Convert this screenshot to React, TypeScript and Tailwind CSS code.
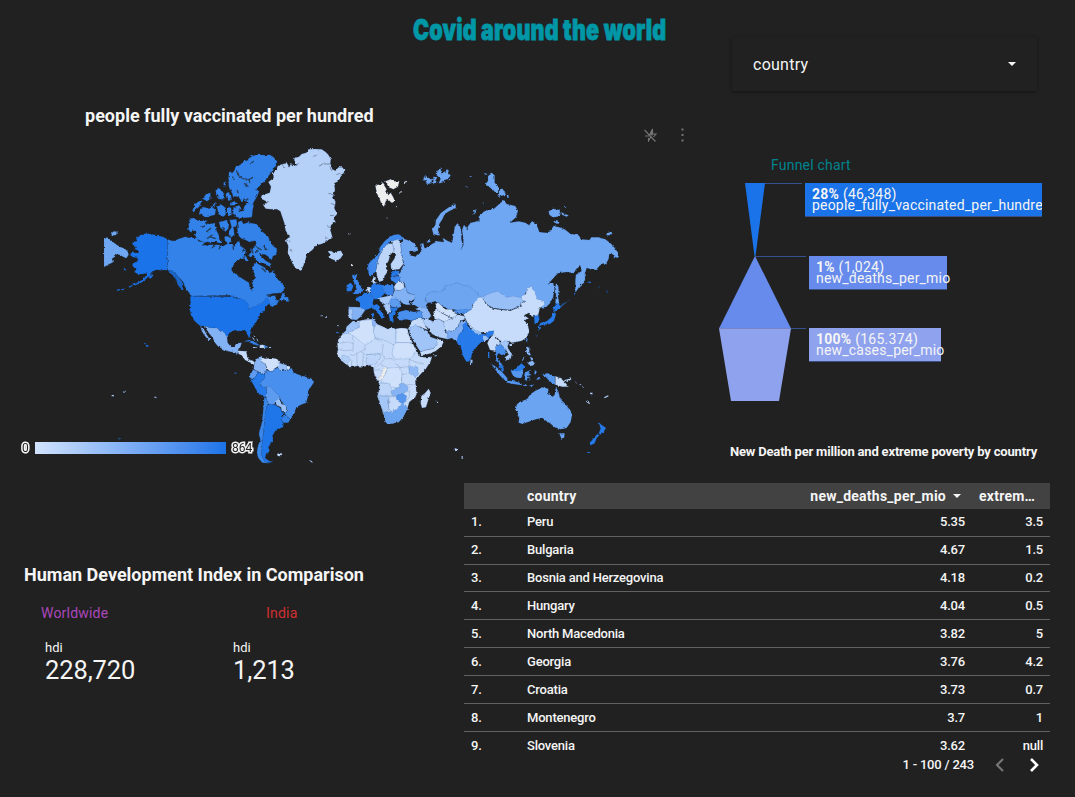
import React from "react";

type Shape = [fill: string, d: string];

/* Each map sheet is drawn on a grid three times finer than the page. */
const northAmerica: Shape[] = [
  ["#70a7f2", "M27 292L38 293 48 301 58 309 66 315 78 322 90 326 98 335 101 344 94 355 84 350 76 345 62 343 60 350 51 356 54 367 42 373 27 381ZM48 281L56 274 66 275 69 280 61 286 52 286Z"],
  ["#1a73e8", "M218 298L205 291 190 287 178 283 168 284 155 278 146 284 134 285 124 294 125 302 112 307 113 314 126 322 118 327 132 332 130 339 108 338 106 345 114 352 130 354 128 364 114 370 111 378 124 388 118 396 130 403 143 402 155 400 150 412 138 422 124 430 112 434 120 436 136 430 150 420 160 410 168 402 176 393 184 389 196 391 208 390 217 391ZM160 412L170 403 175 406 167 416ZM66 450l10-3v3l-10 3ZM78 448l10-2v3l-10 2ZM100 441l12-7v4l-10 6ZM84 387l10 1-2 3-8-1Z"],
  ["#3282e9", "M218 298L230 303 240 302 250 297 262 293 272 290 280 293 290 292 296 296 308 297 310 304 326 306 330 316 350 314 372 314 384 319 396 312 412 312 418 320 425 308 432 300 436 318 446 326 440 342 452 348 440 355 430 360 418 372 410 384 410 392 422 402 436 412 452 422 462 428 464 440 470 452 474 440 470 428 480 414 478 400 472 388 474 372 484 368 496 376 508 382 518 392 528 398 534 392 540 402 548 418 560 430 570 440 566 452 556 460 540 460 526 464 516 472 530 468 545 466 540 478 550 484 542 492 528 500 522 490 516 480 508 486 492 497 476 503 459 507 458 496 450 484 438 477 424 472 408 470 406 466 290 468 284 462 278 452 270 440 266 428 254 414 240 400 230 392 218 391Z"],
  ["#1a66c8", "M218 391L230 391 240 400 252 413 262 428 262 440 266 450 258 446 248 434 244 420 232 406Z"],
  ["#3282e9", "M430 245L440 242 445 252 452 250 460 247 470 250 484 252 494 262 498 272 508 280 520 290 524 304 534 318 546 326 544 344 534 348 530 360 522 352 512 344 500 342 492 340 500 350 512 362 530 372 526 380 510 374 496 368 484 358 476 346 466 352 460 346 470 336 466 326 480 322 484 308 476 300 462 306 452 300 440 296 432 288 428 274 426 258ZM440 318L452 330 450 344 456 354 462 366 452 362 442 354 440 340 448 330Z"],
  ["#3282e9", "M284 236L296 234 310 242 322 244 334 240 330 250 344 252 356 250 362 262 366 276 374 286 372 298 382 304 376 310 362 306 346 306 330 308 316 302 304 296 300 286 304 276 294 270 288 278 280 268 282 250ZM372 246L396 240 402 254 400 266 390 276 382 268 376 262ZM404 240L424 238 426 250 416 264 418 284 406 294 400 276 410 262ZM388 288L402 290 410 304 400 310 390 302Z"],
  ["#3282e9", "M292 212L300 192 312 184 322 182 318 196 308 204 300 214ZM322 176L334 162 346 158 346 176 336 184 330 180ZM316 206L326 200 342 206 352 202 362 210 360 224 346 228 334 234 322 226 312 220ZM366 200L380 194 392 204 392 224 384 230 370 222ZM362 150L372 144 384 156 388 166 388 178 374 178 364 166ZM386 128L392 125 392 136 386 136ZM392 162L400 156 408 166 410 180 400 182 394 172ZM404 190L418 184 428 190 418 196 406 196ZM396 204L408 200 410 224 402 228 396 218ZM416 204L432 196 440 206 430 210 436 214 450 212 446 206 450 196 462 188 476 194 470 232 440 234 420 230 414 218ZM352 192L362 188 360 196ZM348 200L360 196 358 202Z"],
  ["#3282e9", "M402 98L412 98 418 92 422 80 436 74 446 64 458 60 464 52 480 46 496 44 512 46 524 44 536 52 546 64 546 74 536 84 530 96 522 106 516 116 506 126 494 138 484 148 492 154 488 166 482 176 474 190 470 196 456 186 448 176 440 186 432 172 414 168 408 152 402 142 400 122Z"],
  ["#b5d1f8", "M548 78L562 72 576 70 584 82 586 68 592 78 606 76 598 62 598 54 612 50 620 42 634 38 640 28 660 27 680 28 692 36 700 44 708 58 706 70 712 88 722 92 730 82 742 82 750 92 744 102 736 112 730 124 718 130 720 150 714 170 722 186 718 204 726 222 716 238 722 244 708 256 706 270 712 290 696 304 680 312 664 316 652 330 636 342 632 358 626 376 618 392 604 386 594 374 586 354 578 340 580 318 572 300 584 290 572 272 568 250 562 232 556 214 546 208 530 208 512 206 504 194 518 186 498 176 500 166 524 158 528 140 520 126 536 114 534 98 544 90Z"],
  ["#b5d1f8", "M698 334L708 332 716 338 726 334 738 332 744 344 736 356 722 362 708 356 700 350 708 346Z"],
  ["#3282e9", "M552 482L562 462 568 458 568 470 580 472 581 485 572 484 566 478ZM526 496L540 488 552 484 546 492 530 502Z"],
];

const inlets =
  "M424 92L432 108 444 116 462 118 474 112M462 118L464 128M448 130L460 142M412 110L418 120M430 160L426 150M440 190L460 176M466 72L476 64M430 240L428 252 430 264M318 262L330 258M334 276L348 264M336 296L352 284M344 290L362 296M322 316L336 308 338 320M350 326L362 310M372 328L378 312M416 330L414 318M384 262L390 280 378 290M456 320L470 310M468 318L474 340M486 322L500 330M504 318L516 330M480 338L490 330M450 344L446 356M464 364L474 380M500 382L512 396M514 466L534 462 550 470 552 458";

const greenlandFjords =
  "M672 78L686 72 706 72M652 50L664 46M724 104L736 100M704 82L712 94M562 72L566 84M606 76L612 68M512 186L522 184M708 190L722 196M706 226L724 228M690 290L700 296M584 330L592 334M696 260L706 262M574 300L586 304M700 160L714 164";

const southAmerica: Shape[] = [
  ["#1a73e8", "M286 19L408 20 410 16 414 22 428 24 444 28 456 36 460 44 459 57 476 51 490 46 506 36 510 28 520 28 524 38 518 46 508 54 512 60 496 68 492 78 486 92 478 104 470 112 466 122 468 138 462 142 456 132 452 122 440 120 430 124 420 120 404 128 398 136 394 138 386 126 378 126 366 114 346 114 330 108 316 108 306 100 298 92 288 74 284 62 286 40ZM148 159l5 1v3l-5-1ZM153 165l8 1-3 5-5-2Z"],
  ["#83b2f4", "M330 108L346 114 366 114 378 126 386 126 396 140 398 158 406 168 418 170 424 160 440 158 436 172 430 180 428 192 414 186 398 184 384 178 370 170 360 158 352 142 342 130 334 118ZM316 108L326 116 334 132 346 150 343 154 328 136 320 122Z"],
  ["#c6dbf9", "M430 182L454 184 456 198 460 208 474 212 480 218 474 222 462 216 450 210 440 196 430 192ZM494 165L504 164 518 170 508 174 494 174ZM478 136l3 5-4 0ZM472 140l8 10-6-2ZM484 144l8 10-5-1ZM522 171h6v3h-6ZM476 171h6v3h-6Z"],
  ["#3282e9", "M446 156L460 150 476 154 488 162 496 166 484 166 470 160 456 154ZM506 166L518 170 510 174Z"],
  ["#8ab6f5", "M478 218L486 206 500 198 506 206 500 216 512 222 514 240 508 254 498 248 488 244 476 238Z"],
  ["#d0e2fb", "M500 202L510 206 528 204 546 206 556 220 548 230 538 236 534 244 524 244 516 236 512 222 500 216Z"],
  ["#98c0f6", "M552 218L562 222 574 224 578 232 576 240 564 240 554 242 548 232Z"],
  ["#d0e2fb", "M576 226L588 232 580 241 576 238Z"],
  ["#5e9bf0", "M466 248L476 239 488 244 484 258 472 268 464 262Z"],
  ["#267ae9", "M464 264L472 270 484 258 488 246 498 250 510 254 510 266 498 274 496 286 504 292 514 292 516 308 510 322 494 314 484 300 474 282Z"],
  ["#4990ee", "M510 250L514 240 524 244 534 244 540 236 548 234 556 242 580 241 590 234 596 248 616 256 636 262 650 266 656 278 648 290 640 300 638 322 634 338 618 344 604 352 598 370 586 386 576 380 568 368 576 362 574 350 566 342 558 332 552 318 540 308 526 298 514 292 504 292 496 286 498 274 510 266Z"],
  ["#5c9bf0", "M514 292L526 290 540 306 552 316 556 328 542 334 538 344 524 344 516 332 512 318 516 308Z"],
  ["#98c0f6", "M542 330L552 328 560 340 574 348 574 364 560 364 558 352 544 346Z"],
  ["#3282e9", "M562 380L572 376 586 388 580 398 566 398 560 392Z"],
  ["#1f76e8", "M518 342L538 344 556 354 560 366 568 368 562 378 560 392 566 402 564 412 546 418 540 424 532 438 534 450 526 462 520 472 524 482 514 490 510 504 522 512 534 516 516 518 506 512 500 498 500 470 504 440 508 400 510 370Z"],
  ["#3a87ea", "M508 322L514 324 518 342 510 370 508 400 504 440 500 470 500 498 508 514 520 520 502 518 490 504 486 488 488 470 496 450 492 430 500 400 504 370Z"],
  ["#c6dbf9", "M546 492l8-3 8 3-6 7-8-1ZM642 510l8 3 4 5-6-2ZM50 315h7v4h-7ZM85 302h7v3h-7ZM178 320h7v3h-7ZM677 76h6v3h-6ZM690 81h6v2h-6ZM726 106h5v3h-5Z"],
  ["#2f6fc4", "M419 247h5v4h-5ZM68 445h6v3h-5ZM726 126h5v4h-5Z"],
];

const northEurasia: Shape[] = [
  ["#70a7f2", "M250 296L262 300 280 308 292 320 294 332 282 336 268 332 270 346 286 350 296 340 306 332 300 312 310 310 314 326 326 318 340 310 352 304 372 306 368 294 382 302 396 308 400 286 404 262 412 250 420 258 424 276 424 296 428 316 422 330 430 316 430 296 426 270 432 254 442 268 448 250 470 244 480 244 476 230 490 216 506 208 522 206 540 190 552 180 560 192 586 198 594 212 588 232 570 248 596 244 616 248 628 256 634 242 650 252 658 276 676 278 692 274 700 258 718 262 734 268 752 282 776 286 784 298 808 300 814 292 836 292 856 298 872 310 886 326 894 338 894 354 882 350 876 340 868 342 866 356 858 372 840 376 828 390 814 388 800 384 794 404 796 416 792 428 778 440 766 458 766 420 768 404 784 394 784 376 768 388 762 400 740 396 714 400 698 416 684 434 690 430 700 432 704 446 700 470 690 490 676 504 664 506 668 486 660 482 652 482 640 470 624 452 618 456 610 474 606 484 580 486 560 478 545 470 530 460 510 464 486 476 478 472 464 456 446 442 430 440 410 432 396 438 376 440 372 454 352 460 336 458 320 468 316 478 324 488 318 496 326 516 310 512 298 504 282 494 272 490 282 482 286 466 262 458 256 440 252 426 240 424 236 404 242 392 252 372 244 340 242 310Z"],
  ["#70a7f2", "M706 434L712 430 716 448 714 470 718 492 710 500 706 490 708 466ZM352 286L340 282 336 268 346 256 348 240 362 220 378 208 398 194 406 194 408 204 390 212 374 222 368 236 358 252 354 270 360 286ZM496 134L504 122 504 106 514 98 524 106 524 128 536 140 534 158 520 154 512 144ZM540 148L548 146 558 164 542 168 534 174 538 160ZM560 164l8 8-6 2ZM494 99l8 3-4 4ZM460 212l7-4 0 10-6 6ZM488 190l6-3-2 6ZM436 138l8 4-4 2ZM448 108l8 1-4 3ZM320 302l8-3 4 6-10 3Z"],
  ["#70a7f2", "M308 118L318 112 314 104 326 114 336 118 334 130 322 132 316 122ZM340 110L352 112 346 122 354 128 340 130ZM352 92L362 88 364 100 376 96 380 88 386 90 384 102 394 104 386 114 376 120 366 128 356 130 362 116 350 106ZM362 82l5 2-4 4ZM388 116l5 3-7 3Z"],
  ["#70a7f2", "M686 214L700 206 718 210 722 222 714 230 698 232 688 224ZM724 216L734 222 746 226 740 230 726 224ZM700 244L712 240 716 252 704 248ZM734 198l5 1-2 3ZM858 280L868 274 878 278 872 286 860 286Z"],
  ["#eeeeee", "M166 136L186 132 184 124 194 138 200 148 196 156 204 166 212 158 220 172 224 182 214 188 206 180 198 182 192 200 184 192 178 174 170 160ZM196 124L212 118 222 124 238 124 234 140 220 148 206 142ZM252 126l8-4 1 3-8 5ZM238 155l8-1 0 3-8 1ZM225 199h4v3h-4ZM199 232h4v3h-4ZM85 280h6v3h-6ZM93 373h4v6h-4Z"],
  ["#3f89ed", "M144 376L146 404 158 406 168 392 172 370 178 348 190 326 204 308 220 302 236 304 250 296 240 284 222 284 204 294 192 306 180 322 174 344 160 356 148 368Z"],
  ["#bcd5f8", "M168 392L172 370 178 348 190 326 204 308 218 312 222 334 210 346 206 362 200 372 198 386 204 392 196 406 190 420 178 426 172 414 170 400ZM218 312L212 304 236 298 242 314 244 340 250 372 238 388 214 390 212 372 222 358 228 344 222 334Z"],
  ["#c6dcfa", "M222 440L232 424 250 426 254 446 240 452 224 450ZM156 422L160 412 168 412 164 426 172 428 160 432ZM136 452L146 440 152 442 150 456Z"],
  ["#267ae9", "M212 408L218 394 238 392 236 406 224 408ZM80 436L92 428 100 438 94 454 80 454ZM150 440L162 430 190 436 196 458 184 470 190 476 166 478 152 468ZM116 470L134 458 150 458 162 474 158 490 162 500 148 506 136 510 120 506 120 488 104 476ZM154 500L170 492 180 500 178 508 190 522 194 532 184 536 178 524 164 510ZM156 520h6v12h-6ZM206 522L224 508 228 524 218 530 222 546 210 542Z"],
  ["#3a85ec", "M188 436L218 432 222 448 218 466 200 464 190 456ZM212 410L236 408 240 422 228 430 212 420ZM96 406L112 402 108 416 116 424 122 440 130 452 120 462 98 462 110 448 104 434Z"],
  ["#83b2f4", "M218 466L224 450 240 452 256 440 262 458 286 466 284 478 266 486 272 494 258 494 246 488 236 480 218 476ZM86 500L122 502 136 510 122 530 110 540 92 538 86 520Z"],
  ["#a8c9f7", "M86 508L98 506 96 538 86 536ZM176 474L214 466 220 476 210 490 196 494 180 484ZM190 494L210 492 214 512 204 522 196 508Z"],
  ["#5c9bf0", "M214 474L236 480 246 496 236 504 214 500 208 486Z"],
  ["#267ae9", "M210 502L234 504 230 512 214 514Z"],
  ["#6da5f1", "M316 478L320 464 336 454 352 456 372 450 376 436 396 434 410 428 430 436 446 438 464 452 478 466 484 474 472 484 458 492 456 508 430 512 410 510 396 508 384 508 370 498 356 490 344 484 334 488 324 488Z"],
  ["#98c0f6", "M486 472L510 460 530 454 545 462 560 472 580 468 606 474 618 482 602 488 604 496 590 502 572 510 548 508 520 504 502 494Z"],
  ["#c6dcfa", "M430 522L446 512 460 500 458 492 478 472 486 472 496 488 502 496 520 506 548 510 572 512 590 504 604 498 602 490 618 484 606 480 604 468 618 462 620 444 634 442 646 458 652 478 672 482 674 494 660 504 656 520 654 528 644 528 636 530 628 518 612 526 624 534 614 542 622 552 628 572 622 590 606 602 590 606 574 608 568 604 550 604 540 602 526 588 510 582 488 578 470 576 456 566 444 552 438 540ZM568 612h8v6h-7Z"],
  ["#267ae9", "M806 426h4v3h-4ZM834 443h4v3h-4ZM860 452h3v3h-3Z"],
];

const southEurasia: Shape[] = [
  ["#c6dbf9", "M98 94L92 100 80 110 78 122 66 134 56 148 52 162 54 180 50 190 56 200 66 214 80 224 92 232 112 228 130 230 150 226 160 232 162 250 170 268 178 282 178 300 172 318 182 346 190 372 198 398 206 402 236 396 250 380 262 356 268 336 286 322 290 310 288 292 286 272 300 254 318 236 332 214 336 200 314 202 300 200 288 182 278 158 266 134 262 116 244 114 228 118 214 112 204 118 184 108 166 100 164 88 140 88 118 92Z"],
  ["#a0c4f7", "M98 94L118 98 116 112 98 122 84 130 66 132 78 122 80 110Z"],
  ["#d0e2fb", "M118 94L156 88 160 116 166 144 162 150 136 166 98 136 84 130 98 122 118 112Z"],
  ["#8ab6f5", "M156 86L166 88 168 100 164 112 158 106Z"],
  ["#c2d9f9", "M164 112L168 102 184 108 204 118 214 112 228 118 228 158 222 164 186 148 166 144 160 124Z"],
  ["#cfe1fb", "M228 116L244 114 262 116 266 134 276 158 228 158Z"],
  ["#cfe1fb", "M228 158L276 158 288 180 280 198 268 208 250 206 226 208 216 190 222 164Z"],
  ["#b4d0f8", "M66 196L84 198 92 210 84 218 66 212Z"],
  ["#bcd5f8", "M140 194L180 192 182 204 168 222 150 226 138 218Z"],
  ["#d0e2fb", "M204 234L240 232 246 250 244 280 230 294 214 290 206 280 182 278 188 264 198 248Z"],
  ["#8fbaf5", "M266 230L294 230 294 252 286 262 268 250Z"],
  ["#eeeeee", "M188 240L196 232 202 236 190 262 180 272 172 268 184 256Z"],
  ["#bcd5f8", "M178 280L204 280 214 292 214 318 174 318 178 300Z"],
  ["#a5c7f7", "M172 318L206 320 206 360 202 368 190 366 182 346Z"],
  ["#85b3f4", "M214 304L228 294 240 292 238 282 250 280 264 292 262 304 246 312 234 318 218 318Z"],
  ["#5596ef", "M230 318L248 310 260 318 256 336 244 340 230 330Z"],
  ["#6ba4f1", "M190 366L206 366 222 362 236 354 248 338 258 346 262 356 250 380 236 396 206 402 198 398Z"],
  ["#c6dbf9", "M304 318L316 308 326 296 332 308 326 326 318 352 306 354 302 340ZM349 335h5v4h-5ZM404 474l8 3-2 6-5 0ZM424 502h5v4h-4ZM342 196h6v3h-6Z"],
  ["#4990ee", "M232 78L236 66 258 60 282 66 304 62 310 86 296 84 276 92 258 88 240 92Z"],
  ["#8ab6f5", "M286 58L300 50 318 54 328 66 334 78 324 88 308 84 304 64Z"],
  ["#c6dbf9", "M276 92L298 84 310 88 316 106 324 120 302 112 286 108 274 122 264 118 272 100Z"],
  ["#b0cef8", "M308 86L326 88 338 94 344 90 356 86 372 96 374 122 386 136 384 148 356 142 336 132 326 116 314 104Z"],
  ["#a0c4f7", "M270 112L286 106 300 112 320 122 334 142 352 148 354 164 340 176 318 180 302 186 292 172 280 152 268 128Z"],
  ["#c6dbf9", "M300 186L318 180 340 176 352 164 350 150 356 146 372 154 364 170 346 184 326 192 304 196Z"],
  ["#d0e2fb", "M340 66L350 58 366 70 382 78 396 84 374 96 358 88 344 88Z"],
  ["#d0e2fb", "M346 40L360 42 376 58 396 58 400 68 412 72 404 84 392 82 368 70 350 60Z"],
  ["#bcd5f8", "M372 94L400 84 412 74 432 78 436 88 422 92 412 112 398 124 378 122 372 108Z"],
  ["#4e92ee", "M400 62L430 58 456 58 430 72 406 70Z"],
  ["#7bacf3", "M376 122L398 124 412 112 424 92 438 94 442 102 430 118 418 134 414 150 402 150 396 144 384 148 384 134Z"],
  ["#267ae9", "M428 104L440 96 444 108 452 116 468 126 484 132 498 132 506 124 522 122 520 132 508 142 502 150 488 154 480 160 470 170 458 182 454 200 448 214 440 216 430 200 424 178 422 166 412 164 410 154 416 134 430 120Z"],
  ["#98c0f6", "M452 116L458 116 484 128 484 134 466 130ZM488 136L500 138 504 152 490 154ZM452 206L458 214 456 222 450 222Z"],
  ["#c6dbf9", "M508 146L522 132 530 146 542 158 528 168 532 190 524 182 510 180 502 160Z"],
  ["#4990ee", "M526 170L540 162 556 174 558 190 546 196 536 190 530 200 536 214 546 222 552 240 546 244 538 226 528 208 528 190Z"],
  ["#a5c7f7", "M538 158L556 152 568 156 562 172 576 192 572 206 560 212 554 202 566 194 556 176Z"],
  ["#5596ef", "M514 222L528 230 546 246 562 264 562 274 550 268 534 250ZM558 272L584 274 604 280 606 286 580 282 560 278ZM572 240L590 238 610 236 606 262 592 264 578 258ZM614 250L622 244 632 240 624 248 634 254 624 258 632 270 622 264 620 274 612 266ZM668 252L684 250 704 258 706 284 690 276 680 264ZM645 240l6 6-4 12-4-8ZM610 285l12 0-2 3-10 0ZM626 288l16-6-8 10ZM648 264l14 1-6 4-8-1Z"],
  ["#267ae9", "M572 240L588 236 604 220 616 230 606 240 590 244ZM538 226L546 224 552 242 546 242ZM504 186h4v18h-4Z"],
  ["#8ab6f5", "M620 172L628 170 628 186 634 198 624 194 618 184ZM630 200L642 206 634 212ZM626 216L638 212 646 222 636 228 624 222ZM606 210l10-12-2 6-8 10Z"],
  ["#5596ef", "M618 144l5 2-2 10-4-4Z"],
  ["#c6dbf9", "M706 258L724 266 736 278 746 290 726 290 706 284ZM734 270L748 266 750 260 754 268 742 276ZM762 270l8 6-2 2ZM776 278l8 6-2 2ZM784 286l8 6-2 1ZM798 332l12 7-3 2-9-6ZM810 308l8 0-2 8-6-2ZM852 322l12-6 2 3-12 6Z"],
  ["#6ba4f1", "M590 344L598 336 620 328 632 312 644 304 658 296 666 292 686 296 684 310 698 320 704 314 708 292 716 306 720 326 734 340 752 362 756 376 752 396 740 414 722 418 704 412 690 400 680 394 668 384 648 388 624 396 608 402 596 398 598 380 588 358ZM718 430L734 430 732 444 724 446Z"],
  ["#267ae9", "M836 396L844 404 858 414 852 424 842 434 836 430 842 416ZM832 432L838 436 830 444 824 460 812 466 808 460 820 446ZM805 486h5v3h-5ZM642 80L654 74 658 88 654 98 644 102ZM698 52L706 48 710 38 726 50 714 58 704 66ZM700 68L708 72 702 92 690 102 672 104 656 108 662 98 680 94 694 82ZM654 108l9 2-2 10-7-5ZM648 134l5 1-4 5ZM724 46l26-18-24 20ZM762 12l4-6 0 6Z"],
];

const africaBorders =
  "M98 136L100 180 74 182 56 178M136 166L132 180 110 190 100 196 90 194M166 144L190 160 186 192 170 190 140 194 122 186M186 192L194 206 216 206M194 206L180 222 162 236M216 206L240 232 266 230 268 208M268 208L290 218 312 222M180 222L196 230 204 234M162 240L186 240M110 190L112 228M130 192L128 228M96 210L94 230M244 254L266 250M246 280L244 262M250 280L262 284 286 284M206 320L232 320M268 292L268 320 258 336M100 160L84 156 56 160M206 360L206 320";

function Sheet({ shapes, x, y }: { shapes: Shape[]; x: number; y: number }) {
  return (
    <g transform={`translate(${x} ${y}) scale(0.33333)`}>
      {shapes.map(([fill, d], i) => (
        <path key={i} d={d} fill={fill} stroke="#1b4f96" strokeOpacity={0.26} strokeWidth={2} />
      ))}
    </g>
  );
}

function WorldMap() {
  return (
    <svg width="535" height="335" viewBox="0 0 535 335" className="block">
      <defs>
        <filter id="coast" x="0" y="0" width="535" height="335" filterUnits="userSpaceOnUse" colorInterpolationFilters="sRGB">
          <feTurbulence type="fractalNoise" baseFrequency="0.35" numOctaves="2" seed="4" result="n" />
          <feDisplacementMap in="SourceGraphic" in2="n" scale="2.8" xChannelSelector="R" yChannelSelector="G" />
        </filter>
      </defs>
      <g filter="url(#coast)">
        <Sheet shapes={northAmerica} x={0} y={0} />
        <path transform="scale(0.33333)" d={inlets} fill="none" stroke="#212121" strokeOpacity={0.7} strokeWidth={4} />
        <path transform="scale(0.33333)" d={greenlandFjords} fill="none" stroke="#4f5f78" strokeOpacity={0.6} strokeWidth={3} />
        <Sheet shapes={southAmerica} x={0} y={150} />
        <Sheet shapes={northEurasia} x={225} y={0} />
        <Sheet shapes={southEurasia} x={225} y={150} />
        <path transform="translate(225 150) scale(0.33333)" d={africaBorders} fill="none" stroke="#5f7ea8" strokeOpacity={0.45} strokeWidth={2} />
      </g>
    </svg>
  );
}

function Metric({ value }: { value: string }) {
  return (
    <div className="w-[188px]">
      <div className="text-[13px] leading-[16px]">hdi</div>
      <div className="text-[25.5px] leading-[28px] tracking-[-0.1px]">{value}</div>
    </div>
  );
}

const rows = [
  ["Peru", "5.35", "3.5"],
  ["Bulgaria", "4.67", "1.5"],
  ["Bosnia and Herzegovina", "4.18", "0.2"],
  ["Hungary", "4.04", "0.5"],
  ["North Macedonia", "3.82", "5"],
  ["Georgia", "3.76", "4.2"],
  ["Croatia", "3.73", "0.7"],
  ["Montenegro", "3.7", "1"],
  ["Slovenia", "3.62", "null"],
];

function DataTable() {
  return (
    <div className="w-[586px]">
      <div className="flex h-[26px] items-center bg-[#424242] text-[14px] font-bold tracking-[0.24px]">
        <div className="w-[63px]" />
        <div className="flex-1">country</div>
        <div className="flex items-center">
          new_deaths_per_mio
          <svg width="8" height="4" viewBox="0 0 8 4" className="mr-[18px] ml-[7px]">
            <path d="M0 0h8L4 4z" fill="#f5f5f5" />
          </svg>
        </div>
        <div className="w-[71px]">extrem…</div>
      </div>
      <div className="h-[245px] overflow-hidden text-[13px] font-medium tracking-[-0.2px]">
        {rows.map(([country, deaths, poverty], i) => (
          <div
            key={country}
            className={`flex items-start border-b border-[#616161] pt-[3px] pr-[7px] pl-[7px] leading-[20px] ${i === 2 ? "h-[27px]" : "h-[28px]"} ${i > 2 ? "pt-[4px]" : "pt-[3px]"}`}
          >
            <div className="w-[56px]">{i + 1}.</div>
            <div className="flex-1">{country}</div>
            <div className="w-[120px] text-right">{deaths}</div>
            <div className="w-[78px] text-right">{poverty}</div>
          </div>
        ))}
      </div>
      <div className="-mt-[1px] flex h-[24px] items-center justify-end text-[13px] font-medium tracking-[-0.2px]">
        <span>1 - 100 / 243</span>
        <svg width="9" height="14" viewBox="0 0 9 14" className="ml-[21px]" fill="none" stroke="#757575" strokeWidth="2.2">
          <path d="M8 1L2 7l6 6" />
        </svg>
        <svg width="9" height="14" viewBox="0 0 9 14" className="mr-[11px] ml-[26px]" fill="none" stroke="#ffffff" strokeWidth="2.6">
          <path d="M1 1l6 6-6 6" />
        </svg>
      </div>
    </div>
  );
}

function FunnelLabel({ percent, count, name, className }: { percent: string; count: string; name: string; className: string }) {
  return (
    <div className={`h-[34px] border-b border-[#3b4f80] pt-[6px] pl-[7px] text-[14px] leading-[11px] whitespace-nowrap ${className}`}>
      <div className="tracking-[0.25px]">
        <b>{percent}</b> ({count})
      </div>
      <div className="tracking-[0.2px]">{name}</div>
    </div>
  );
}

export default function App() {
  return (
    <main className="h-[797px] w-[1075px] overflow-hidden bg-[#212121] font-['Roboto',sans-serif] text-[#f5f5f5]">
      <div className="flex h-[483px]">
        <section className="w-[700px]">
          <h1 className="ml-[413px] h-[104px] w-max origin-left scale-x-[0.767] pt-[13px] font-['Inter',sans-serif] text-[28px] leading-[34px] font-black tracking-[0.2px] whitespace-nowrap text-[#0097a7] [-webkit-text-stroke:0.8px_#0097a7]">
            Covid around the world
          </h1>
          <h2 className="ml-[85px] h-[22px] text-[18px] leading-[23px] font-bold">people fully vaccinated per hundred</h2>
          <div className="flex h-[14px] items-center justify-end pt-[4px] pr-[16px]">
            <svg width="13" height="14" viewBox="0 0 13 14" fill="none" stroke="#757575" strokeWidth="1.1">
              <path d="M0.5 2l11 11.5M1 8h4L8.500 1v5H12L9.500 9M7 8.500L4.500 13V10" />
              <path d="M6.500 6L8 3v4z" fill="#757575" />
            </svg>
            <svg width="3" height="14" viewBox="0 0 3 14" className="ml-[24px]" fill="#757575">
              <path d="M.5.500h2v2h-2zM.5 6h2v2h-2zM.5 11.500h2v2h-2z" />
            </svg>
          </div>
          <div className="relative pl-[95px]">
            <WorldMap />
            <div className="absolute top-[301px] left-[22px] flex items-center text-[12px] leading-[14px] text-[#222]">
              <span className="w-[13px] [paint-order:stroke_fill] [-webkit-text-stroke:3px_#f5f5f5]">0</span>
              <span className="h-[12px] w-[191px] bg-gradient-to-r from-[#d2e3fc] to-[#1a73e8]" />
              <span className="ml-[6px] [paint-order:stroke_fill] [-webkit-text-stroke:3px_#f5f5f5]">864</span>
            </div>
          </div>
        </section>

        <section className="w-[375px] pt-[37px]">
          <div className="ml-[32px] flex h-[54px] w-[305px] items-center justify-between pr-[21px] pl-[21px] shadow-[0_1px_3px_rgba(0,0,0,0.4)]">
            <span className="pt-[2px] text-[16px] tracking-[0.25px]">country</span>
            <svg width="8" height="4" viewBox="0 0 8 4">
              <path d="M0 0h8L4 4z" fill="#f5f5f5" />
            </svg>
          </div>
          <div className="mt-[65px] ml-[71px] h-[27px] text-[14px] leading-[18px] tracking-[0.2px] text-[#00838f]">Funnel chart</div>
          <div className="flex h-[219px]">
            <svg width="106" height="219" viewBox="0 0 106 219">
              <path d="M65 .5h37M55 73.500h51M90 145.500h16" stroke="#35508c" />
              <path d="M45 0h20L55.500 73h-1z" fill="#1a73e8" />
              <path d="M55 73L91 145.500H19z" fill="#668bec" />
              <path d="M19 145.500h72L79 218H31z" fill="#8fa2ee" />
              <path d="M19 145.500h72" stroke="#7785c4" />
            </svg>
            <div>
              <FunnelLabel percent="28%" count="46,348" name="people_fully_vaccinated_per_hundre" className="-ml-px mb-[39px] w-[237px] overflow-hidden bg-[#1a73e8]" />
              <FunnelLabel percent="1%" count="1,024" name="new_deaths_per_mio" className="mb-[38px] ml-[3px] w-[138px] bg-[#668bec]" />
              <FunnelLabel percent="100%" count="165.374" name="new_cases_per_mio" className="ml-[3px] w-[132px] bg-[#8fa2ee]" />
            </div>
          </div>
          <h2 className="mt-[41px] ml-[30px] text-[13px] leading-[18px] font-bold tracking-[-0.18px]">New Death per million and extreme poverty by country</h2>
        </section>
      </div>

      <div className="flex">
        <section className="w-[464px] pt-[80px]">
          <h2 className="ml-[24px] text-[18px] leading-[24px] font-bold">Human Development Index in Comparison</h2>
          <div className="mt-[17px] flex text-[14px] leading-[18px] tracking-[0.2px]">
            <span className="ml-[41px] w-[225px] text-[#ab47bc]">Worldwide</span>
            <span className="text-[#d32f2f]">India</span>
          </div>
          <div className="mt-[18px] ml-[45px] flex">
            <Metric value="228,720" />
            <Metric value="1,213" />
          </div>
        </section>
        <DataTable />
      </div>
    </main>
  );
}
